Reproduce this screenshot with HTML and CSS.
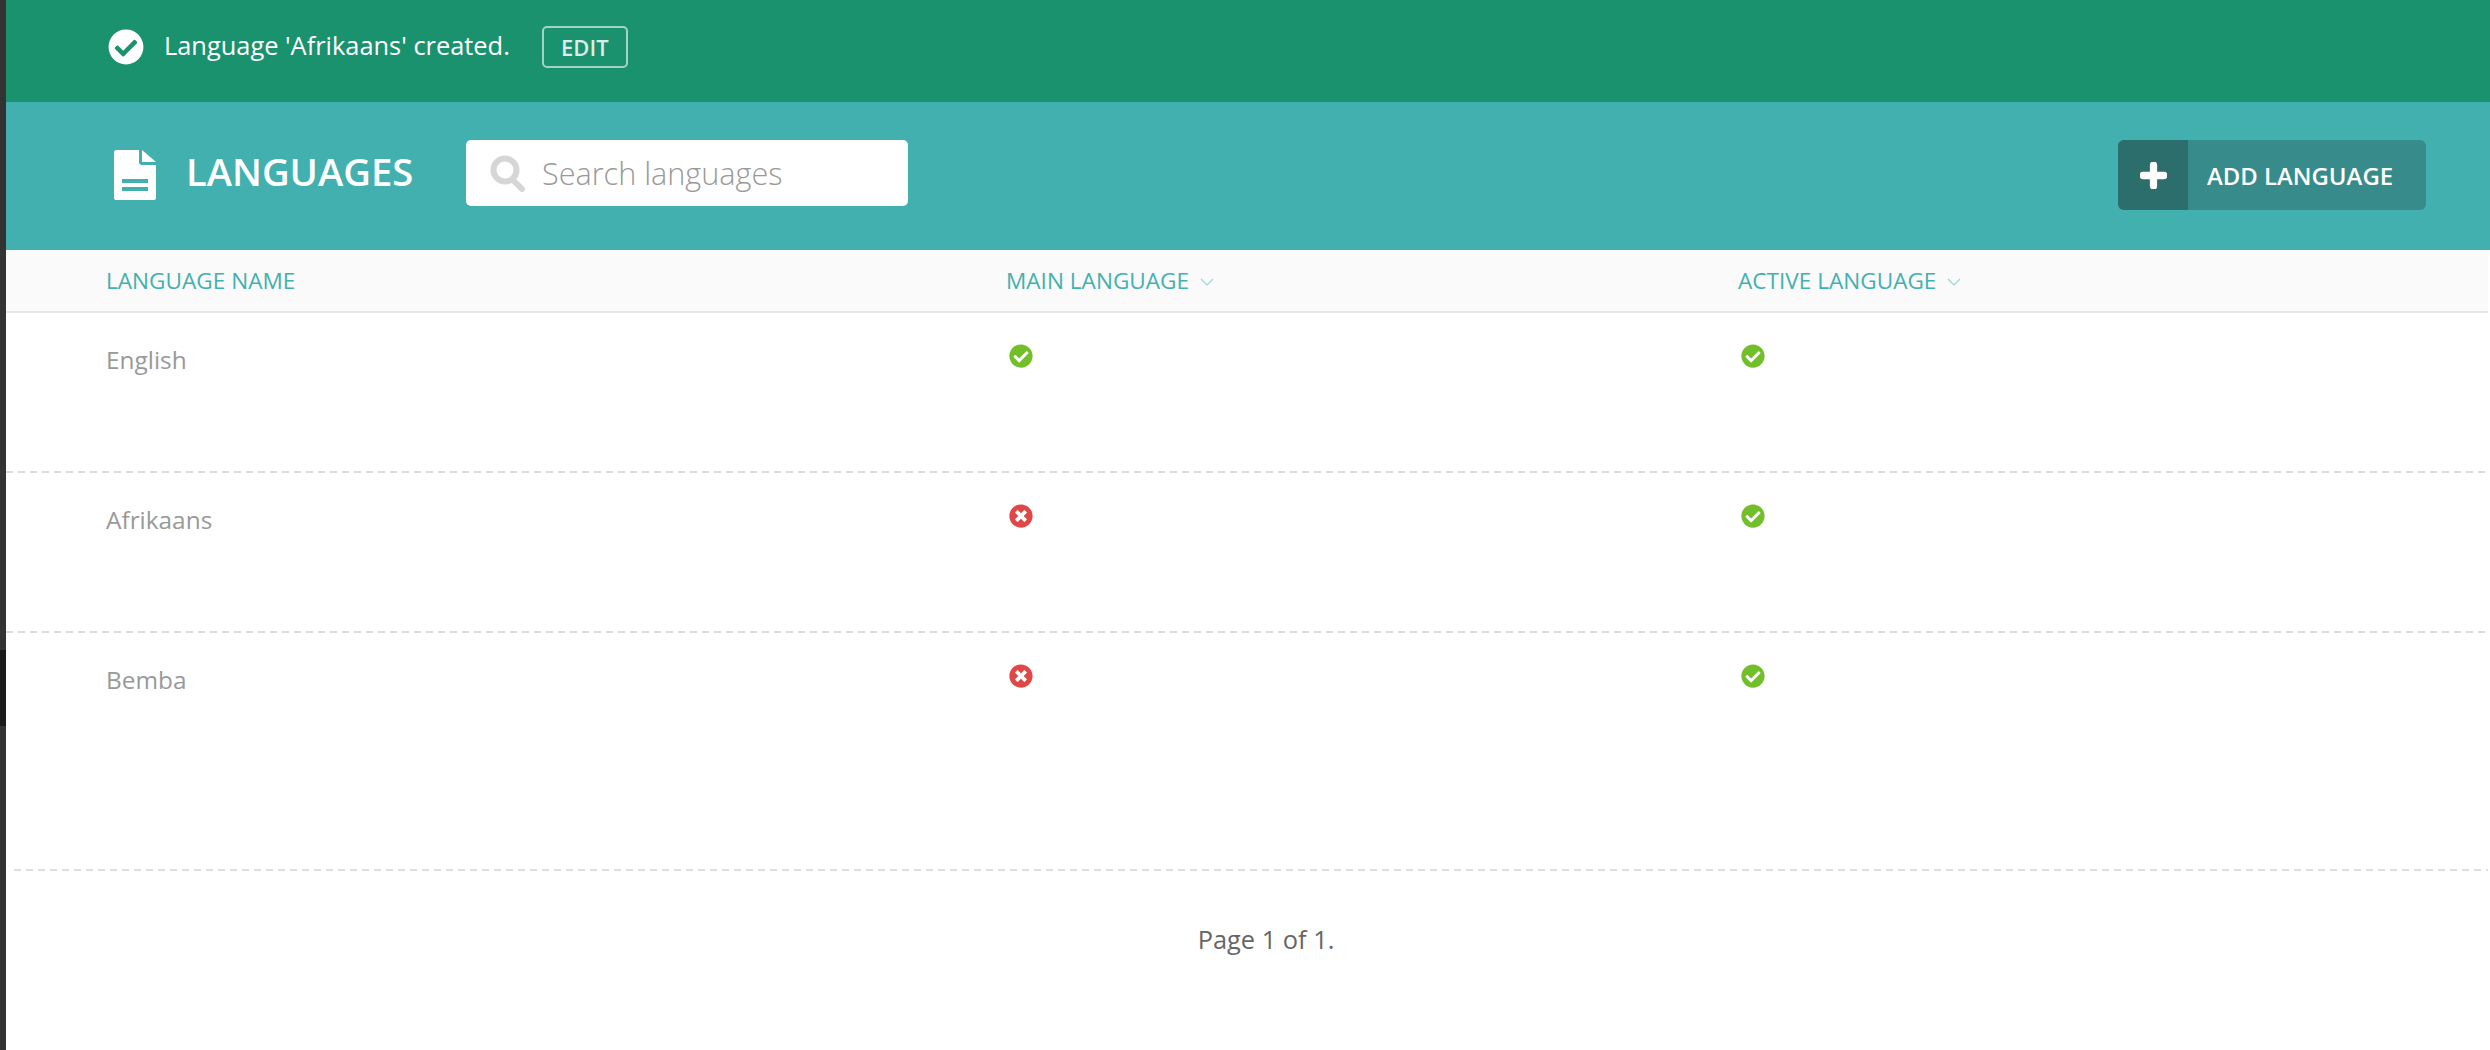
FILE: index.html

```html
<!DOCTYPE html>
<html lang="en">
<head>
  <meta charset="UTF-8" />
  <title>Languages</title>
  <link rel="stylesheet" href="styles.css">
</head>
<body>
  <svg class="defs" width="0" height="0">
    <symbol id="yes" viewBox="0 0 512 512"><path d="M504 256c0 136.967-111.033 248-248 248S8 392.967 8 256 119.033 8 256 8s248 111.033 248 248zM227.314 387.314l184-184c6.248-6.248 6.248-16.379 0-22.627l-22.627-22.627c-6.248-6.249-16.379-6.249-22.628 0L216 308.118l-70.059-70.059c-6.248-6.248-16.379-6.248-22.628 0l-22.627 22.627c-6.248 6.248-6.248 16.379 0 22.627l104 104c6.249 6.249 16.379 6.249 22.628.001z"/></symbol>
    <symbol id="no" viewBox="0 0 512 512"><path d="M256 8C119 8 8 119 8 256s111 248 248 248 248-111 248-248S393 8 256 8zm121.6 313.1c4.7 4.7 4.7 12.3 0 17L338 377.6c-4.7 4.7-12.3 4.7-17 0L256 312l-65.1 65.6c-4.7 4.7-12.3 4.7-17 0L134.4 338c-4.7-4.7-4.7-12.3 0-17l65.6-65-65.6-65.1c-4.7-4.7-4.7-12.3 0-17l39.6-39.6c4.7-4.7 12.3-4.7 17 0l65 65.7 65.1-65.6c4.7-4.7 12.3-4.7 17 0l39.6 39.6c4.7 4.7 4.7 12.3 0 17L312 256l65.6 65.1z"/></symbol>
    <symbol id="caret" viewBox="0 0 14 8"><path d="M1 1l6 6 6-6" fill="none" stroke="currentColor" stroke-width="1.2"/></symbol>
  </svg>

  <div class="rail"></div>
  <div class="app">
    <div class="notice">
      <svg class="notice-icon"><use href="#yes"/></svg>
      <span class="notice-text">Language 'Afrikaans' created.</span>
      <a class="edit-btn">EDIT</a>
    </div>

    <div class="toolbar">
      <svg class="doc-icon" viewBox="0 0 42 50">
        <path fill="#fff" fill-rule="evenodd" d="M2 0h23v12c0 2 1 3 3 3h14v33c0 1-1 2-2 2H2c-1 0-2-1-2-2V2C0 1 1 0 2 0zM8 29v4h26v-4zM8 37v4h26v-4z"/>
        <path fill="#fff" d="M28 0l14 12H29c-.6 0-1-.4-1-1z"/>
      </svg>
      <h1 class="title">LANGUAGES</h1>
      <div class="search">
        <svg class="search-icon" viewBox="0 0 36 38"><circle cx="15" cy="15" r="11.5" fill="none" stroke="#d6d6d6" stroke-width="6"/><path d="M23 25l9 9" stroke="#d6d6d6" stroke-width="6" stroke-linecap="round"/></svg>
        <span class="search-text">Search languages</span>
      </div>
      <a class="add-btn">
        <span class="add-plus"><svg viewBox="0 0 26 26"><path d="M13 3v20M3 13h20" stroke="#fff" stroke-width="7" stroke-linecap="round"/></svg></span>
        <span class="add-label">ADD LANGUAGE</span>
      </a>
    </div>

    <div class="table-head row-grid">
      <div>LANGUAGE NAME</div>
      <div class="sortable">MAIN LANGUAGE <svg class="caret"><use href="#caret"/></svg></div>
      <div class="sortable">ACTIVE LANGUAGE <svg class="caret"><use href="#caret"/></svg></div>
    </div>

    <div class="table-row row-grid">
      <div class="lang-name">English</div>
      <div><svg class="flag yes"><use href="#yes"/></svg></div>
      <div><svg class="flag yes"><use href="#yes"/></svg></div>
    </div>
    <div class="table-row row-grid">
      <div class="lang-name">Afrikaans</div>
      <div><svg class="flag no"><use href="#no"/></svg></div>
      <div><svg class="flag yes"><use href="#yes"/></svg></div>
    </div>
    <div class="table-row last row-grid">
      <div class="lang-name">Bemba</div>
      <div><svg class="flag no"><use href="#no"/></svg></div>
      <div><svg class="flag yes"><use href="#yes"/></svg></div>
    </div>

    <div class="pager">Page 1 of 1.</div>
  </div>
</body>
</html>
```

FILE: styles.css

```css
html, body {
  margin: 0;
  padding: 0;
  height: 100%;
}
body {
  display: flex;
  background: #fff;
  font-family: 'Open Sans', sans-serif;
  overflow: hidden;
}
.defs {
  position: absolute;
}
.rail {
  width: 6px;
  flex: none;
  background: linear-gradient(#333 0 650px, #1a1a1a 650px 726px, #333 726px);
}
.app {
  width: 2482px;
  flex: none;
}

/* green message bar */
.notice {
  height: 102px;
  background: #1a926e;
  display: flex;
  align-items: flex-start;
  padding: 29px 0 0 102px;
  box-sizing: border-box;
  width: 2484px;
  color: #fff;
}
.notice-icon {
  width: 36px;
  height: 36px;
  fill: #fff;
}
.notice-text {
  margin-left: 20px;
  font-size: 25.4px;
  line-height: 32px;
}
.edit-btn {
  margin: -3px 0 0 32px;
  width: 86px;
  height: 42px;
  box-sizing: border-box;
  border: 2px solid rgba(255, 255, 255, 0.6);
  border-radius: 5px;
  font-size: 22px;
  font-weight: 600;
  color: rgba(255, 255, 255, 0.85);
  display: flex;
  align-items: center;
  justify-content: center;
}

/* teal header */
.toolbar {
  height: 148px;
  width: 2484px;
  background: #43b0b0;
  display: flex;
  align-items: flex-start;
  box-sizing: border-box;
  padding: 38px 0 0 108px;
}
.doc-icon {
  width: 42px;
  height: 50px;
  margin-top: 10px;
}
.title {
  margin: 8px 0 0 30px;
  font-size: 38.2px;
  line-height: 46px;
  font-weight: 600;
  color: #fff;
  width: 280px;
}
.search {
  width: 442px;
  height: 66px;
  background: #fff;
  border-radius: 5px;
  display: flex;
  align-items: center;
  padding-left: 24px;
  box-sizing: border-box;
}
.search-icon {
  width: 36px;
  height: 38px;
  margin-top: 2px;
}
.search-text {
  margin-left: 16px;
  font-size: 30.6px;
  font-weight: 300;
  color: #999;
}
.add-btn {
  margin-left: auto;
  margin-right: 64px;
  width: 308px;
  height: 70px;
  background: #388b8b;
  border-radius: 6px;
  display: flex;
  align-items: center;
  overflow: hidden;
  color: #fff;
}
.add-plus {
  width: 70px;
  height: 70px;
  background: #2c6e6c;
  display: flex;
  align-items: center;
  justify-content: center;
}
.add-plus svg {
  width: 27px;
  height: 27px;
}
.add-label {
  margin-left: 19px;
  font-size: 23.9px;
  font-weight: 600;
}

/* table */
.row-grid {
  display: grid;
  grid-template-columns: 900px 732px 1fr;
  padding-left: 100px;
  box-sizing: border-box;
}
.table-head {
  height: 63px;
  background: #fafafa;
  border-bottom: 2px solid #e6e6e6;
  align-items: center;
  font-size: 22.6px;
  color: #43b0b0;
}
.caret {
  width: 14px;
  height: 8px;
  margin-left: 5px;
  vertical-align: 3px;
  color: #9ad6d6;
}
.table-row {
  height: 160px;
  padding-top: 31px;
  align-items: start;
  background: repeating-linear-gradient(90deg, #dddddd 0 7px, transparent 7px 12px) bottom / 100% 2px no-repeat;
}
.table-row.last {
  height: 238px;
  margin-left: 8px;
  padding-left: 92px;
}
.lang-name {
  font-size: 24.4px;
  line-height: 32px;
  color: #999;
}
.flag {
  width: 24px;
  height: 24px;
  margin-left: 3px;
  display: block;
}
.flag.yes {
  fill: #72bf2b;
}
.flag.no {
  fill: #e04848;
}
.pager {
  padding: 52px 0 0 38px;
  text-align: center;
  font-size: 25.4px;
  line-height: 32px;
  color: #666;
}
```
